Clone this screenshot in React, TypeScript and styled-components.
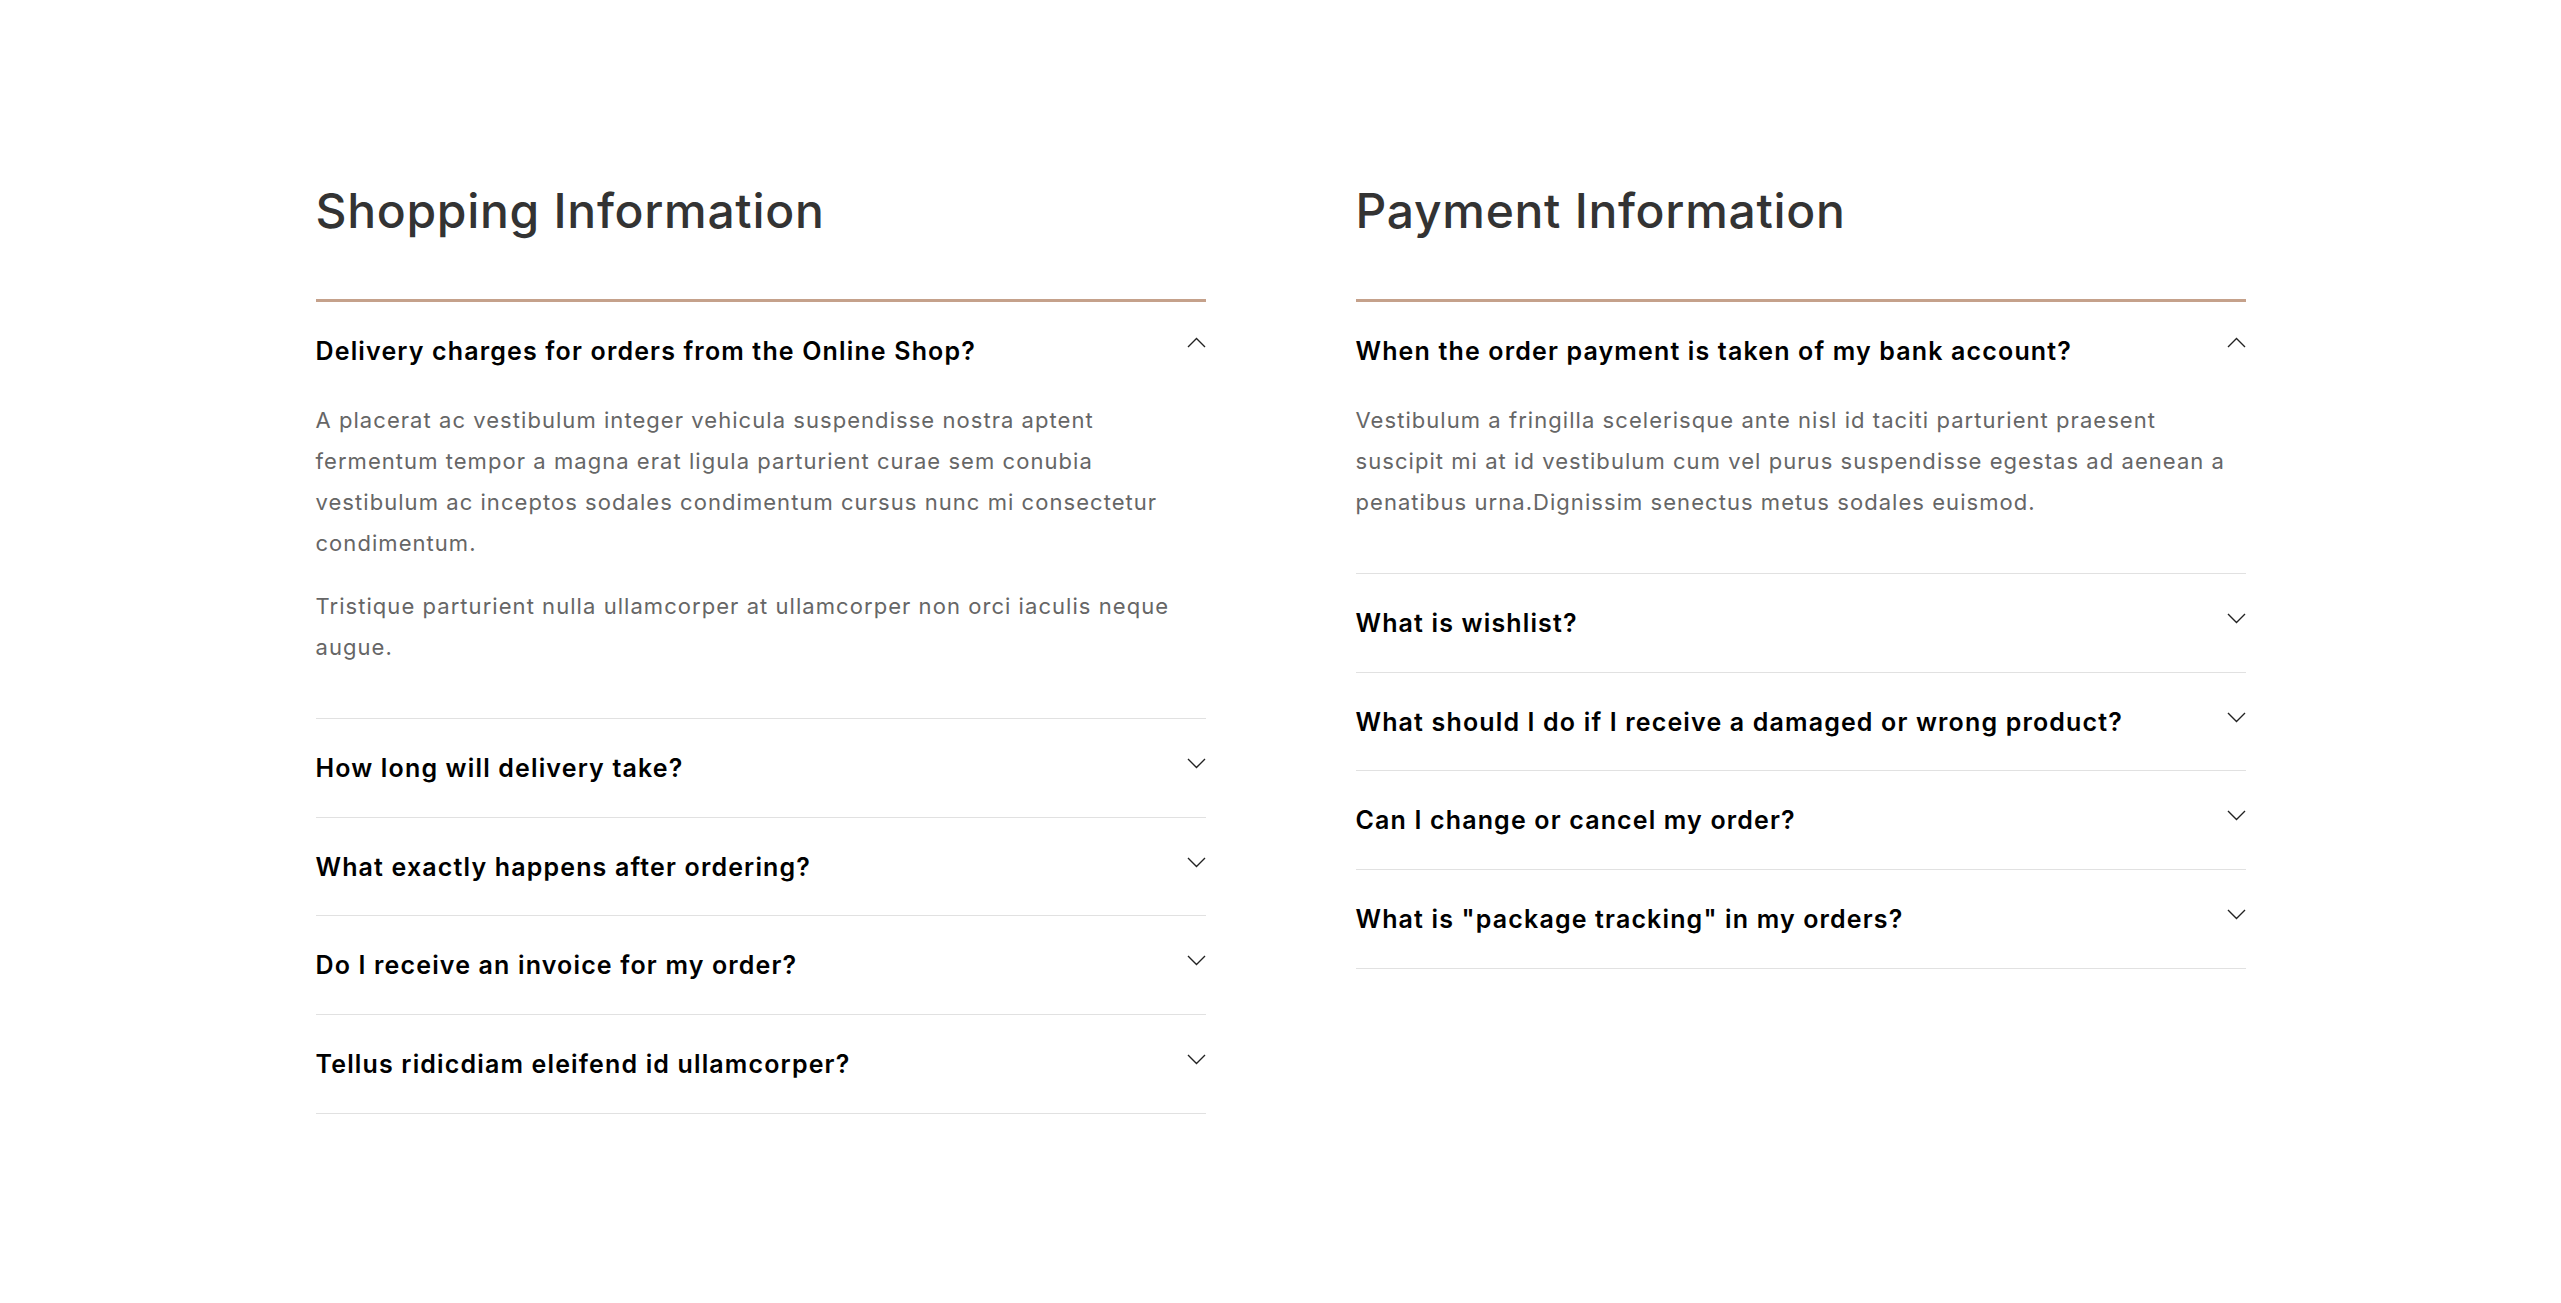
import React from "react";
import styled, { createGlobalStyle } from "styled-components";

const GlobalStyle = createGlobalStyle`
  html, body { margin: 0; padding: 0; background: #ffffff; }
  body { font-family: Inter, "Noto Sans", sans-serif; -webkit-font-smoothing: antialiased; }
  * { box-sizing: border-box; }
`;

const Page = styled.main`
  width: 1930px;
  margin: 0 auto;
  padding: 182px 0 120px;
  display: grid;
  grid-template-columns: 890px 890px;
  column-gap: 150px;
  align-items: start;
`;

const Column = styled.section`
  display: flex;
  flex-direction: column;
`;

const Heading = styled.h2`
  margin: 0 0 59px;
  font-family: Inter, "Noto Sans", sans-serif;
  font-weight: 500;
  font-size: 48px;
  line-height: 58px;
  color: #333333;
  letter-spacing: 0.7px;
`;

const List = styled.div`
  border-top: 3px solid #c5a18b;
`;

const Item = styled.div`
  border-bottom: 1px solid #e1e1e1;
`;

const Header = styled.div`
  display: flex;
  justify-content: space-between;
  align-items: flex-start;
  padding: 32px 0 31.75px;
  cursor: pointer;
`;

const Question = styled.h3`
  margin: 0;
  font-family: Inter, "Noto Sans", sans-serif;
  font-weight: 600;
  font-size: 25px;
  line-height: 34px;
  letter-spacing: 1.15px;
  color: #000000;
`;

const Chevron = styled.svg<{ $open: boolean }>`
  flex: none;
  width: 19px;
  height: 11px;
  margin-top: ${(p) => (p.$open ? "3px" : "7px")};
  transform: ${(p) => (p.$open ? "rotate(180deg)" : "none")};
`;

const Body = styled.div`
  padding: 0 0 28px;
`;

const Paragraph = styled.p`
  margin: 0 0 22px;
  font-family: Inter, "Noto Sans", sans-serif;
  font-weight: 400;
  font-size: 22px;
  line-height: 41px;
  letter-spacing: 1.05px;
  color: #666666;
`;

type Faq = { q: string; a?: string[] };

const shopping: Faq[] = [
  {
    q: "Delivery charges for orders from the Online Shop?",
    a: [
      "A placerat ac vestibulum integer vehicula suspendisse nostra aptent fermentum tempor a magna erat ligula parturient curae sem conubia vestibulum ac inceptos sodales condimentum cursus nunc mi consectetur condimentum.",
      "Tristique parturient nulla ullamcorper at ullamcorper non orci iaculis neque augue.",
    ],
  },
  { q: "How long will delivery take?" },
  { q: "What exactly happens after ordering?" },
  { q: "Do I receive an invoice for my order?" },
  { q: "Tellus ridicdiam eleifend id ullamcorper?" },
];

const payment: Faq[] = [
  {
    q: "When the order payment is taken of my bank account?",
    a: [
      "Vestibulum a fringilla scelerisque ante nisl id taciti parturient praesent suscipit mi at id vestibulum cum vel purus suspendisse egestas ad aenean a penatibus urna.Dignissim senectus metus sodales euismod.",
    ],
  },
  { q: "What is wishlist?" },
  { q: "What should I do if I receive a damaged or wrong product?" },
  { q: "Can I change or cancel my order?" },
  { q: 'What is "package tracking" in my orders?' },
];

const ChevronIcon = ({ open }: { open: boolean }) => (
  <Chevron $open={open} viewBox="0 0 19 11" fill="none">
    <path d="M1 1 L9.5 9.5 L18 1" stroke="#222222" strokeWidth="1.4" />
  </Chevron>
);

const FaqColumn = ({ title, items }: { title: string; items: Faq[] }) => (
  <Column>
    <Heading>{title}</Heading>
    <List>
      {items.map((it) => (
        <Item key={it.q}>
          <Header>
            <Question>{it.q}</Question>
            <ChevronIcon open={!!it.a} />
          </Header>
          {it.a && (
            <Body>
              {it.a.map((p, i) => (
                <Paragraph key={i}>{p}</Paragraph>
              ))}
            </Body>
          )}
        </Item>
      ))}
    </List>
  </Column>
);

export default function App() {
  return (
    <>
      <GlobalStyle />
      <Page>
        <FaqColumn title="Shopping Information" items={shopping} />
        <FaqColumn title="Payment Information" items={payment} />
      </Page>
    </>
  );
}
